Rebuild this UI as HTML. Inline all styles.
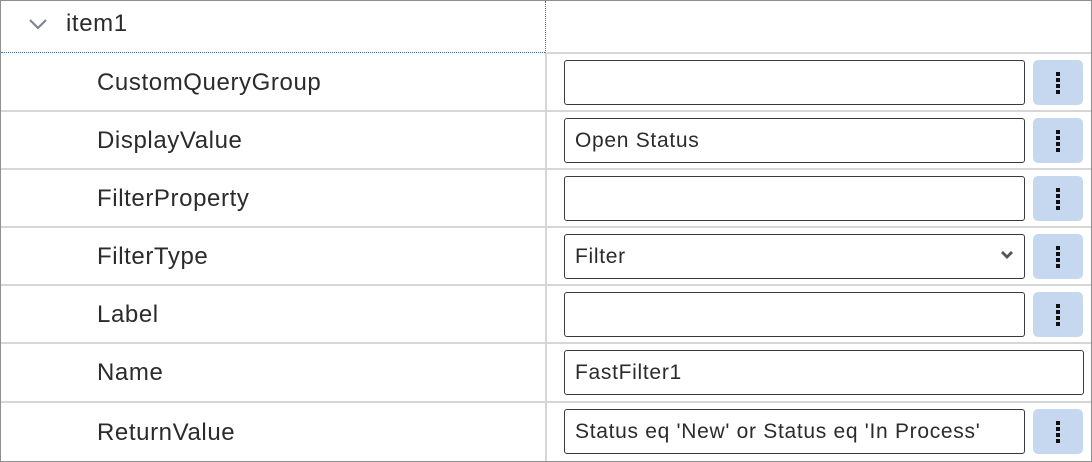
<!DOCTYPE html>
<html><head><style>
html,body{margin:0;padding:0;background:#fff;}
body{width:1092px;height:462px;position:relative;overflow:hidden;font-family:"Liberation Sans",Arial,sans-serif;color:#2b2b2b;}
.frame{position:absolute;left:0;top:0;width:1090px;height:460px;border:1px solid #8f8f8f;}
.hline{position:absolute;left:1px;width:1090px;height:2px;background:#d6d6d6;}
.vline{position:absolute;left:545px;top:53px;width:2px;height:408px;background:#d6d6d6;}
.lbl{position:absolute;left:97px;font-size:24px;line-height:26px;letter-spacing:0.6px;}
.inp{position:absolute;left:564px;width:461px;height:45px;border:1.5px solid #3a3a3a;border-radius:3px;box-sizing:border-box;font-size:21px;line-height:44px;padding-left:10px;letter-spacing:0.7px;}
.btn{position:absolute;left:1033px;width:50px;height:45px;background:#c5d8ef;border-radius:5px;}
.btn i{position:absolute;left:23px;width:4px;height:4px;background:#111;}
</style></head><body>
<div class="frame"></div>
<div style="position:absolute;left:1px;top:52px;width:544px;border-top:1px dotted #3b6fc4"></div>
<div style="position:absolute;left:545px;top:1px;height:52px;border-left:1px dotted #3b6fc4"></div>
<div style="position:absolute;left:547px;top:52px;width:544px;height:2px;background:#d6d6d6"></div>
<svg style="position:absolute;left:28px;top:17px" width="20" height="14"><path d="M2 3 L10 11 L18 3" fill="none" stroke="#7d8590" stroke-width="2.2"/></svg>
<div style="position:absolute;left:66px;top:11px;font-size:24px;line-height:26px;letter-spacing:0.6px">item1</div>
<div class="vline"></div>
<div class="hline" style="top:110px"></div>
<div class="hline" style="top:168px"></div>
<div class="hline" style="top:226px"></div>
<div class="hline" style="top:284px"></div>
<div class="hline" style="top:342px"></div>
<div class="hline" style="top:401px"></div>

<div class="lbl" style="top:70px">CustomQueryGroup</div>
<div class="lbl" style="top:128px">DisplayValue</div>
<div class="lbl" style="top:186px">FilterProperty</div>
<div class="lbl" style="top:244px">FilterType</div>
<div class="lbl" style="top:302px">Label</div>
<div class="lbl" style="top:360px">Name</div>
<div class="lbl" style="top:420px">ReturnValue</div>

<div class="inp" style="top:60px"></div>
<div class="inp" style="top:118px">Open Status</div>
<div class="inp" style="top:176px"></div>
<div class="inp" style="top:234px">Filter<svg style="position:absolute;right:10px;top:15px" width="14" height="10"><path d="M2 2 L7 7 L12 2" fill="none" stroke="#555" stroke-width="2.8"/></svg></div>
<div class="inp" style="top:292px"></div>
<div class="inp" style="top:350px;width:520px">FastFilter1</div>
<div class="inp" style="top:409px">Status eq 'New' or Status eq 'In Process'</div>

<div class="btn" style="top:60px"><i style="top:12px"></i><i style="top:18px"></i><i style="top:24px"></i><i style="top:30px"></i></div>
<div class="btn" style="top:118px"><i style="top:12px"></i><i style="top:18px"></i><i style="top:24px"></i><i style="top:30px"></i></div>
<div class="btn" style="top:176px"><i style="top:12px"></i><i style="top:18px"></i><i style="top:24px"></i><i style="top:30px"></i></div>
<div class="btn" style="top:234px"><i style="top:12px"></i><i style="top:18px"></i><i style="top:24px"></i><i style="top:30px"></i></div>
<div class="btn" style="top:292px"><i style="top:12px"></i><i style="top:18px"></i><i style="top:24px"></i><i style="top:30px"></i></div>
<div class="btn" style="top:409px"><i style="top:12px"></i><i style="top:18px"></i><i style="top:24px"></i><i style="top:30px"></i></div>
</body></html>
